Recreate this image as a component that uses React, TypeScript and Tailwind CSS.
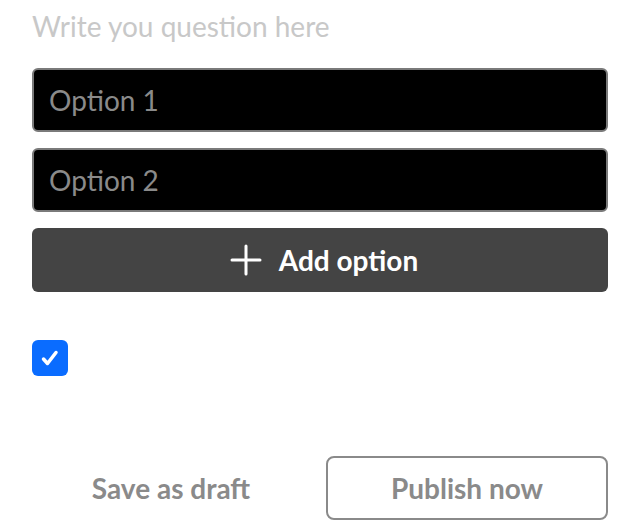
import React from "react";

export default function App() {
  return (
    <div
      className="w-[640px] h-[520px] bg-white px-8 flex flex-col overflow-hidden"
      style={{ fontFamily: "Lato, 'Open Sans', sans-serif" }}
    >
      <div className="pt-[8px] h-[68px] text-[28px] leading-[36px] text-[#c8c8c8]">
        Write you question here
      </div>
      <div className="flex flex-col gap-4">
        <div className="h-16 rounded-md border-2 border-[#7a7a7a] bg-black flex items-center px-[15px] text-[28px] text-[#8a8a8a]">
          Option 1
        </div>
        <div className="h-16 rounded-md border-2 border-[#7a7a7a] bg-black flex items-center px-[15px] text-[28px] text-[#8a8a8a]">
          Option 2
        </div>
        <div className="h-16 rounded-md bg-[#444444] flex items-center justify-center gap-[17px] pl-2 text-white text-[28px] font-bold">
          <svg width="32" height="32" viewBox="0 0 32 32" fill="none">
            <path d="M16 2v28M2 16h28" stroke="white" strokeWidth="3" strokeLinecap="round" />
          </svg>
          <span>Add option</span>
        </div>
      </div>
      <div className="mt-12">
        <div className="w-9 h-9 rounded-md bg-[#0a6cff] flex items-center justify-center">
          <svg width="22" height="22" viewBox="0 0 22 22" fill="none">
            <path d="M4.5 12l4 4.5L17 5.5" stroke="white" strokeWidth="3.5" strokeLinecap="round" strokeLinejoin="round" />
          </svg>
        </div>
      </div>
      <div className="mt-20 flex gap-4">
        <div className="flex-1 h-16 flex items-center justify-center text-[28px] font-bold text-[#8a8a8a]">
          Save as draft
        </div>
        <div className="flex-1 h-16 rounded-lg border-2 border-[#8a8a8a] flex items-center justify-center text-[28px] font-bold text-[#8a8a8a]">
          Publish now
        </div>
      </div>
    </div>
  );
}
